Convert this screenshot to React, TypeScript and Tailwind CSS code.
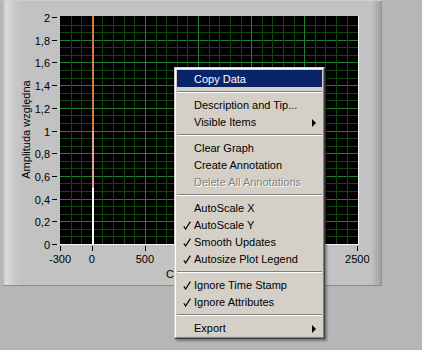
import React from 'react';

type Item =
  | { kind: 'sep' }
  | { kind: 'item'; label: string; checked?: boolean; sub?: boolean; active?: boolean; disabled?: boolean };

const items: Item[] = [
  { kind: 'item', label: 'Copy Data', active: true },
  { kind: 'sep' },
  { kind: 'item', label: 'Description and Tip...' },
  { kind: 'item', label: 'Visible Items', sub: true },
  { kind: 'sep' },
  { kind: 'item', label: 'Clear Graph' },
  { kind: 'item', label: 'Create Annotation' },
  { kind: 'item', label: 'Delete All Annotations', disabled: true },
  { kind: 'sep' },
  { kind: 'item', label: 'AutoScale X' },
  { kind: 'item', label: 'AutoScale Y', checked: true },
  { kind: 'item', label: 'Smooth Updates', checked: true },
  { kind: 'item', label: 'Autosize Plot Legend', checked: true },
  { kind: 'sep' },
  { kind: 'item', label: 'Ignore Time Stamp', checked: true },
  { kind: 'item', label: 'Ignore Attributes', checked: true },
  { kind: 'sep' },
  { kind: 'item', label: 'Export', sub: true },
];

// graph scales (page coordinates)
const xOf = (v: number) => 60 + (v + 300) * 0.10618;
const yOf = (v: number) => 244 - v * 113.5;

const ContextMenu: React.FC = () => (
  <div className="absolute left-[174px] top-[67px] w-[151px] border border-t-[#d4d0c8] border-l-[#d4d0c8] border-b-[#404040] border-r-[#404040] bg-[#d4d0c8] shadow-[2px_2px_2px_rgba(0,0,0,0.35)]">
    <div className="border border-t-white border-l-white border-b-[#808080] border-r-[#808080] p-px">
      {items.map((it, i) =>
        it.kind === 'sep' ? (
          <div key={i} className="h-[9px] flex items-center">
            <div className="w-full h-[2px] border-t border-t-[#808080] border-b border-b-white" />
          </div>
        ) : (
          <div
            key={i}
            className={
              'h-[17px] flex items-center text-[11px] leading-none ' +
              (it.active ? 'bg-[#0a246a] text-white' : it.disabled ? 'text-[#808080] [text-shadow:1px_1px_0_#ffffff]' : 'text-black')
            }
          >
            <div className="w-[17px] h-full flex items-center pl-[6px] pt-[2px]">
              {it.checked && (
                <svg width="8" height="9" viewBox="0 0 8 9">
                  <path d="M0.8 5.2 L2.6 8 L7.4 0.6" fill="none" stroke="#000" strokeWidth="1.2" />
                </svg>
              )}
            </div>
            <span className="flex-1 whitespace-nowrap pt-[2px]">{it.label}</span>
            {it.sub && (
              <svg width="4" height="8" viewBox="0 0 4 8" className="mr-[6px] mt-[2px]">
                <path d="M0 0 L4 4 L0 8 Z" fill="#000" />
              </svg>
            )}
          </div>
        )
      )}
    </div>
  </div>
);

const Graph: React.FC = () => {
  const vLines: { x: number; major: boolean }[] = [];
  for (let v = -200; v <= 2400; v += 100) vLines.push({ x: Math.round(xOf(v)) + 0.5, major: v % 500 === 0 });
  const hLines: { y: number; major: boolean }[] = [];
  for (let k = 1; k < 30; k++) hLines.push({ y: Math.round(yOf((k * 0.2) / 3)) + 0.5, major: k % 3 === 0 });
  const yTicks = [0, 0.2, 0.4, 0.6, 0.8, 1, 1.2, 1.4, 1.6, 1.8, 2];
  const xTicks = [-300, 0, 500, 2500];

  return (
    <svg width="379" height="286" viewBox="3 0 379 286" className="block" fontFamily="'Liberation Sans', Arial, sans-serif" fontSize="11">
      <rect x="60" y="16" width="298" height="228" fill="#000" />
      {hLines.map((l, i) => (
        <line key={'h' + i} x1="60" x2="358" y1={l.y} y2={l.y} stroke={l.major ? '#23802a' : '#0f4712'} strokeWidth="1" />
      ))}
      {vLines.map((l, i) => (
        <line key={'v' + i} x1={l.x} x2={l.x} y1="16" y2="244" stroke={l.major ? '#23802a' : '#0f4712'} strokeWidth="1" />
      ))}
      <line x1="358.5" x2="358.5" y1="16" y2="245" stroke="#f4f4f4" />
      <line x1="60" x2="359" y1="244.5" y2="244.5" stroke="#f4f4f4" />
      {/* data trace */}
      <rect x="92" y="16" width="2" height="115" fill="#d27b3a" />
      <rect x="92" y="131" width="2" height="57" fill="#ec9c9c" />
      <rect x="92" y="188" width="2" height="56" fill="#ffffff" />
      {yTicks.map((v) => (
        <g key={'yt' + v}>
          <line x1="52" x2="57" y1={Math.round(yOf(v)) + 0.5} y2={Math.round(yOf(v)) + 0.5} stroke="#000" />
          <text x="50" y={Math.round(yOf(v)) + 4.5} textAnchor="end" fill="#000">
            {String(Math.round(v * 10) / 10).replace('.', ',')}
          </text>
        </g>
      ))}
      {xTicks.map((v) => (
        <g key={'xt' + v}>
          <line x1={Math.round(xOf(v)) + 0.5} x2={Math.round(xOf(v)) + 0.5} y1="246" y2="251" stroke="#000" />
          <text x={xOf(v)} y="263" textAnchor="middle" fill="#000">
            {v}
          </text>
        </g>
      ))}
      <text x="166" y="277.5" fill="#000">Czas</text>
      <text transform="translate(30 129.5) rotate(-90)" textAnchor="middle" fill="#000">
        Amplituda względna
      </text>
    </svg>
  );
};

const App: React.FC = () => {
  return (
    <div className="relative w-[422px] h-[350px] overflow-hidden bg-[#b6b6b6] font-['Liberation_Sans',Arial,sans-serif]">
      <div className="ml-[3px] w-[379px] h-[286px] border-t border-t-[#cdcdcd] border-b border-b-[#8c8c8c] bg-[linear-gradient(to_right,#bdbdbd_0px,#dddddd_3px,#c8c8c8_12px,#c2c2c2_20px,#c2c2c2_368px,#a4a4a4_377px,#8e8e8e_379px)]">
        <div className="-mt-px">
          <Graph />
        </div>
      </div>
      <ContextMenu />
    </div>
  );
};

export default App;
